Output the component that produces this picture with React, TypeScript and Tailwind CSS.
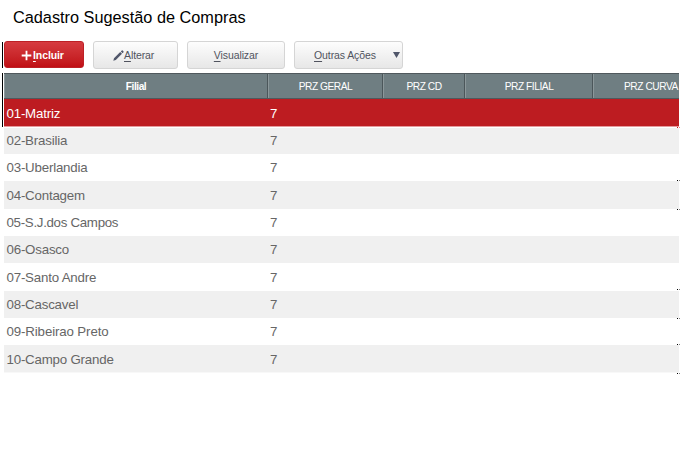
import React from "react";

const rows = [
  { name: "01-Matriz", h: "h-[27px] pt-[2px]", tone: "bg-[#bd1c21] text-white" },
  { name: "02-Brasilia", h: "h-[26px]", tone: "bg-[#f0f0f0]" },
  { name: "03-Uberlandia", h: "h-[27px] pt-px", tone: "bg-white" },
  { name: "04-Contagem", h: "h-[28px] pt-px", tone: "bg-[#f0f0f0]" },
  { name: "05-S.J.dos Campos", h: "h-[27px] pt-px tracking-[-0.3px]", tone: "bg-white" },
  { name: "06-Osasco", h: "h-[27px] pt-px", tone: "bg-[#f0f0f0]" },
  { name: "07-Santo Andre", h: "h-[28px] pt-px", tone: "bg-white" },
  { name: "08-Cascavel", h: "h-[27px] pt-px", tone: "bg-[#f0f0f0]" },
  { name: "09-Ribeirao Preto", h: "h-[27px] pt-px tracking-[-0.13px]", tone: "bg-white" },
  { name: "10-Campo Grande", h: "h-[27px] pt-[2px]", tone: "bg-[#f0f0f0]" },
];

const columns = [
  { label: "Filial", cls: "w-[264px] font-bold justify-center" },
  { label: "PRZ GERAL", cls: "w-[115px] justify-center" },
  { label: "PRZ CD", cls: "w-[82px] justify-center" },
  { label: "PRZ FILIAL", cls: "w-[128px] justify-center" },
  { label: "PRZ CURVA", cls: "w-[82px] pl-[30px] border-r-0" },
];

const marks = [
  { top: 127, color: "bg-[#d01018]" },
  { top: 180, color: "bg-black" },
  { top: 209, color: "bg-black" },
  { top: 289, color: "bg-black" },
  { top: 318, color: "bg-black" },
  { top: 344, color: "bg-black" },
  { top: 373, color: "bg-black" },
];

const buttonBase =
  "flex h-[28px] items-center rounded-[3px] border border-[#d5d5d5] bg-linear-to-b from-[#fdfdfd] to-[#e7e7e7] text-[10.5px] leading-none tracking-[-0.1px] text-[#50535e] whitespace-nowrap";

function Hotkey({ text }: { text: string }) {
  return (
    <span>
      <span className="underline underline-offset-2">{text[0]}</span>
      {text.slice(1)}
    </span>
  );
}

export default function App() {
  return (
    <div className="relative h-[469px] w-[680px] overflow-hidden bg-white font-['Liberation_Sans',Arial,sans-serif]">
      <h1 className="h-[41px] pt-[6px] pl-[13px] text-[16.3px] leading-[22px] text-black">
        Cadastro Sugestão de Compras
      </h1>

      <div className="flex h-[32px] items-start pl-[2px]">
        <span className="mt-px h-[26px] w-px bg-black" />
        <button className="ml-px flex h-[27px] w-[80px] items-center gap-px rounded-[3px] border border-[#bd2026] bg-linear-to-b from-[#d63b40] to-[#c00d14] pt-px pl-[16px] text-[10.5px] leading-none font-bold tracking-[-0.1px] text-white">
          <svg width="11" height="11" viewBox="0 0 11 11" aria-hidden="true">
            <path d="M5.5 .7v9.6M.7 5.5h9.6" stroke="white" strokeWidth="1.8" fill="none" />
          </svg>
          <Hotkey text="Incluir" />
        </button>
        <button className={`${buttonBase} ml-[9px] w-[85px] pl-[19px]`}>
          <svg width="11" height="11" viewBox="0 0 11 11" aria-hidden="true">
            <path d="M0.3 10.7 1 8.2 7.2 2 9 3.8 2.8 10ZM7.8 1.4 8.8.5Q9.2.1 9.7.6L10.4 1.3Q10.9 1.8 10.5 2.3L9.6 3.2Z" fill="#50566a" />
          </svg>
          <Hotkey text="Alterar" />
        </button>
        <button className={`${buttonBase} ml-[9px] w-[98px] justify-center`}>
          <Hotkey text="Visualizar" />
        </button>
        <button className={`${buttonBase} ml-[9px] w-[109px] justify-between pr-[2px] pl-[19px]`}>
          <Hotkey text="Outras Ações" />
          <svg width="7" height="6" viewBox="0 0 7 6" aria-hidden="true">
            <path d="M0 0h7L3.5 6Z" fill="#50566a" />
          </svg>
        </button>
      </div>

      <div className="flex pl-[2px]">
        <span className="mr-px h-[54px] w-px shrink-0 bg-black" />
        <div className="w-[675px] text-[#666]">
          <div className="flex h-[26px] border-t border-b border-[#50595d] bg-[#6f7e82] text-[10.2px] tracking-[-0.45px] text-white">
            {columns.map((c) => (
              <div
                key={c.label}
                className={`flex shrink-0 items-center border-r border-l border-r-[#4b565a] border-l-[#8b979a] pt-[3px] leading-none whitespace-nowrap ${c.cls}`}
              >
                {c.label}
              </div>
            ))}
          </div>
          <div className="tracking-[-0.2px]">
            {rows.map((r, i) => (
              <React.Fragment key={r.name}>
                <div className={`flex items-center text-[13.3px] leading-none ${r.h} ${r.tone}`}>
                  <span className="w-[266px] pl-[2.5px]">{r.name}</span>
                  <span>7</span>
                </div>
                {i === 0 && <div className="h-[2px] border-t border-[#e59a9d] bg-white" />}
              </React.Fragment>
            ))}
          </div>
          <div className="h-px bg-[#f8f8f8]" />
        </div>
      </div>

      {marks.map((m) => (
        <div key={m.top} className="absolute left-[677px] flex gap-px" style={{ top: m.top }}>
          <span className={`size-px ${m.color}`} />
          <span className={`size-px opacity-50 ${m.color}`} />
        </div>
      ))}
    </div>
  );
}
